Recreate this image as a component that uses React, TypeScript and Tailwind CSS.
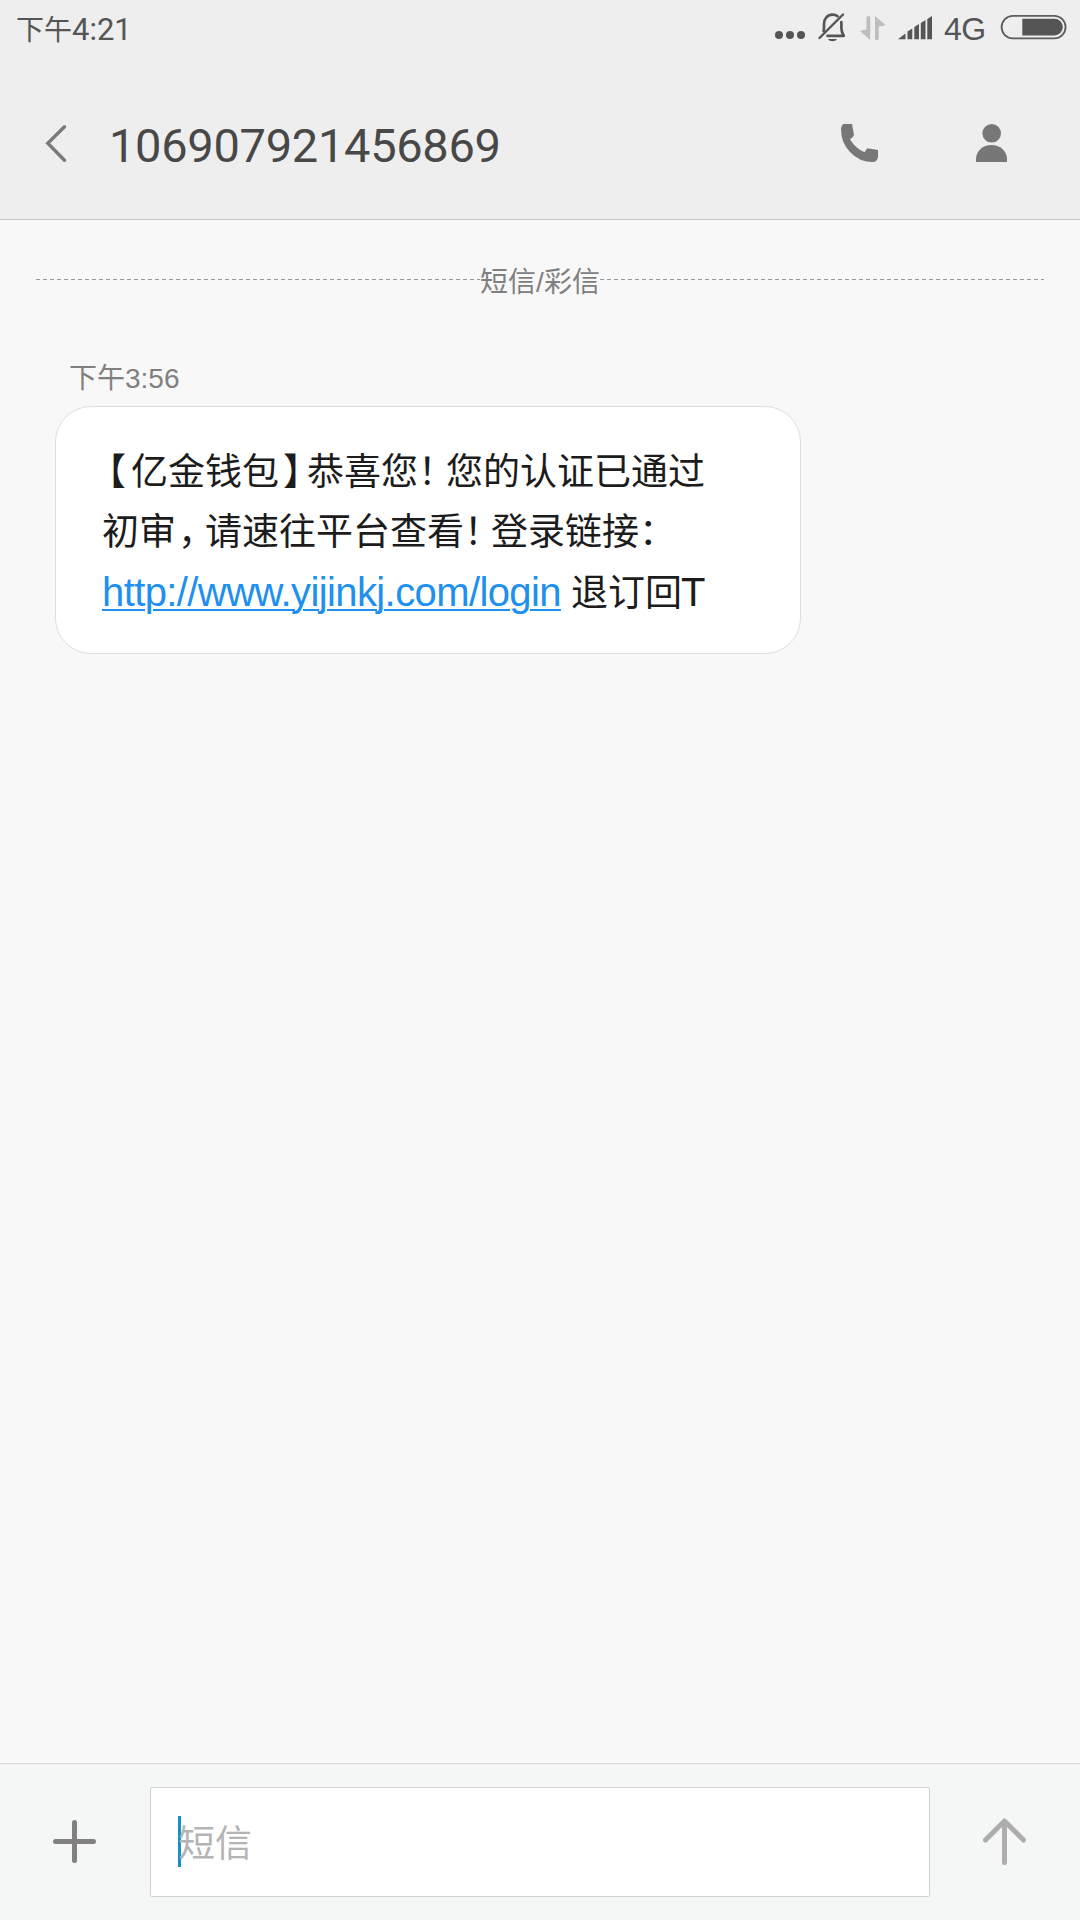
import type { ReactNode } from 'react';

const BellOffIcon = () => (
  <svg width="30" height="30" viewBox="0 0 30 30" fill="none" stroke="#555555" strokeWidth="2.7" strokeLinecap="round" strokeLinejoin="round">
    <path d="M1.5 26 L25 2.5" strokeWidth="2.4" />
    <path d="M5.6 19 C6.2 17.5 6 16 6 12 C6 6.5 9.5 2.7 14.5 2.7 C16.8 2.7 18.3 3.2 19.6 4.2" />
    <path d="M23.3 10 C23.5 12 23.4 14 23.4 16 C23.4 20 24.3 21 25.8 23.8 L9.5 23.8" />
    <path d="M10 27 C11.5 30 17.5 30 19 27 Z" fill="#555555" stroke="none" />
  </svg>
);

const DataIcon = () => (
  <svg width="26" height="24" viewBox="0 0 26 24" fill="#bdbdbd">
    <path d="M6.5 1.5 Q6.5 0 8.5 0 Q10.2 0 10.2 1.5 V24 L0 15 Q2 14 6.5 13.5 Z" />
    <path d="M15 0 L25.5 9 Q23.5 10 18.7 10.5 V22.5 Q18.7 24 16.8 24 Q15 24 15 22.5 Z" />
  </svg>
);

const SignalIcon = () => (
  <svg width="35" height="24" viewBox="0 0 35 24" fill="#555555">
    <path d="M0 23.2 L7.5 17.5 V23.2 Z" />
    <path d="M9.5 15.5 L14.3 12.5 V23.2 H9.5 Z" />
    <path d="M16.3 11 L21 8 V23.2 H16.3 Z" />
    <path d="M22.8 7 L27.5 4 V23.2 H22.8 Z" />
    <path d="M29.3 3 L34 0 V23.2 H29.3 Z" />
  </svg>
);

const BatteryIcon = () => (
  <svg width="68" height="26" viewBox="0 0 68 26" fill="none">
    <rect x="1.6" y="1.8" width="64" height="22.6" rx="11.3" stroke="#5c5c5c" strokeWidth="1.8" />
    <path d="M22.3 4.8 H54.5 A8.3 8.3 0 0 1 54.5 21.4 H22.3 Z" fill="#555555" />
  </svg>
);

const BackIcon = () => (
  <svg width="24" height="40" viewBox="0 0 24 40" fill="none" stroke="#7a7a7a" strokeWidth="3.4" strokeLinecap="round" strokeLinejoin="miter">
    <path d="M20.5 2.7 L3.8 19.3 L20.5 36.3" />
  </svg>
);

const PhoneIcon = () => (
  <svg width="38" height="38" viewBox="0 0 38 38" fill="#777777">
    <path d="M2.5 0 H11 L13 11 Q12.5 13 9 15.2 Q14.5 24.5 23.5 28.3 Q25 25.5 26.5 24.2 L37 26 V33 Q36 38 32 38 Q18 38 9 28 Q0 18.5 0 5 Q0 1.5 2.5 0 Z" />
  </svg>
);

const PersonIcon = () => (
  <svg width="32" height="38" viewBox="0 0 32 38" fill="#777777">
    <circle cx="15.7" cy="9.3" r="9.3" />
    <path d="M0 38 V35 C0 27 7 21 15.5 21 C24 21 31 27 31 35 V38 Z" />
  </svg>
);

// Full width punctuation, tightened to sit closer to its neighbours
const Mark = ({ className, children }: { className: string; children: ReactNode }) => (
  <span className={className}>{children}</span>
);

const StatusBar = () => (
  <div className="flex h-[56px] items-start justify-between pl-4 pr-[12px] text-[#555555]">
    <span className="mt-[8px] whitespace-nowrap font-['Roboto',sans-serif] text-[31px] leading-[40px]">
      <span className="font-['Noto_Sans_CJK_SC',sans-serif] text-[28px]">下午</span>4:21
    </span>
    <div className="flex h-full items-start">
      <div className="mt-[31px] flex gap-[3px]">
        <span className="size-2 rounded-full bg-[#555555]" />
        <span className="size-2 rounded-full bg-[#555555]" />
        <span className="size-2 rounded-full bg-[#555555]" />
      </div>
      <div className="ml-[13px] mt-3"><BellOffIcon /></div>
      <div className="ml-[12px] mt-[15.5px]"><DataIcon /></div>
      <div className="ml-[12px] mt-4"><SignalIcon /></div>
      <span className="ml-[11px] mt-[9px] w-[44px] whitespace-nowrap text-[32px] leading-[40px] tracking-[-0.5px]">4G</span>
      <div className="ml-[12px] mt-[14px]"><BatteryIcon /></div>
    </div>
  </div>
);

const App = () => {
  return (
    <div className="flex h-[1920px] w-[1080px] flex-col overflow-hidden bg-[#f8f8f8] font-['Liberation_Sans','Noto_Sans_CJK_SC',sans-serif]">
      <header className="h-[220px] shrink-0 border-b border-[#c8c8c8] bg-[#eeeeee]">
        <StatusBar />
        <div className="flex h-[163px] items-start pl-[44px] pr-[72px]">
          <button className="mt-[68px]"><BackIcon /></button>
          <h1 className="ml-[41px] mt-[60px] whitespace-nowrap font-['Roboto',sans-serif] text-[47px] leading-[60px] tracking-[-0.3px] text-[#484848]">
            106907921456869
          </h1>
          <button className="ml-auto mt-[68px]"><PhoneIcon /></button>
          <button className="ml-[97px] mt-[68px]"><PersonIcon /></button>
        </div>
      </header>

      <main className="flex-1">
        {/* Section divider */}
        <div className="mx-[36px] mt-[43px] flex h-[40px] items-center">
          <div className="mb-[7px] h-px flex-1 bg-[repeating-linear-gradient(90deg,#9a9a9a_0_4px,transparent_4px_7px)]" />
          <span className="text-[28px] leading-[40px] text-[#808080]">短信/彩信</span>
          <div className="mb-[7px] h-px flex-1 bg-[repeating-linear-gradient(90deg,#9a9a9a_0_4px,transparent_4px_7px)]" />
        </div>

        <div className="ml-[69px] mt-[56px] text-[28px] leading-[40px] text-[#808080]">下午3:56</div>

        <div className="ml-[55px] mt-[7px] h-[248px] w-[746px] rounded-[36px] border-[1.5px] border-[#dedede] bg-white pl-[46px] pt-[36px] text-[37px] leading-[60px] text-[#1c1c1c]">
          <div className="whitespace-nowrap">
            <Mark className="-ml-[13px] tracking-[5px]">【</Mark>亿金钱包<Mark className="ml-[4px] tracking-[-13px]">】</Mark>恭喜您<Mark className="tracking-[-9px]">！</Mark>您的认证已通过
          </div>
          <div className="whitespace-nowrap">
            初审<Mark className="ml-[2px] tracking-[-10px]">，</Mark>请速往平台查看<Mark className="tracking-[-10px]">！</Mark>登录链接<Mark>：</Mark>
          </div>
          <div className="-mt-px whitespace-nowrap">
            <a className="inline-block w-[459px] text-[40px] tracking-[-0.6px] text-[#2090f0] underline decoration-2 underline-offset-[3px]">http://www.yijinkj.com/login</a>
            <span className="ml-[10px]">退订回</span>
            <span className="-ml-px text-[40px]">T</span>
          </div>
        </div>
      </main>

      {/* Compose bar */}
      <footer className="flex h-[157px] shrink-0 items-start border-t border-[#d8dada] bg-[#f5f7f7]">
        <button className="ml-[53px] mt-[56px]">
          <svg width="43" height="43" viewBox="0 0 43 43" stroke="#808080" strokeWidth="5" strokeLinecap="round">
            <path d="M2.5 21.5 H40.5 M21.5 2.5 V40.5" />
          </svg>
        </button>
        <div className="ml-[54px] mt-[23px] flex h-[110px] w-[780px] items-start rounded-[2px] border border-[#cfd3d3] bg-white pl-[27px]">
          <div className="mt-[28px] h-[51px] w-[3px] bg-[#1890c8]" />
          <span className="-ml-[3px] mt-[32px] text-[37px] leading-[50px] text-[#b4b4b4]">短信</span>
        </div>
        <button className="ml-[53px] mt-[54px]">
          <svg width="43" height="48" viewBox="0 0 43 48" fill="none" stroke="#adadad" strokeWidth="5" strokeLinecap="round" strokeLinejoin="round">
            <path d="M21.5 3.5 V44.5 M2.5 22 L21.5 3 L40.5 22" />
          </svg>
        </button>
      </footer>
    </div>
  );
};

export default App;
